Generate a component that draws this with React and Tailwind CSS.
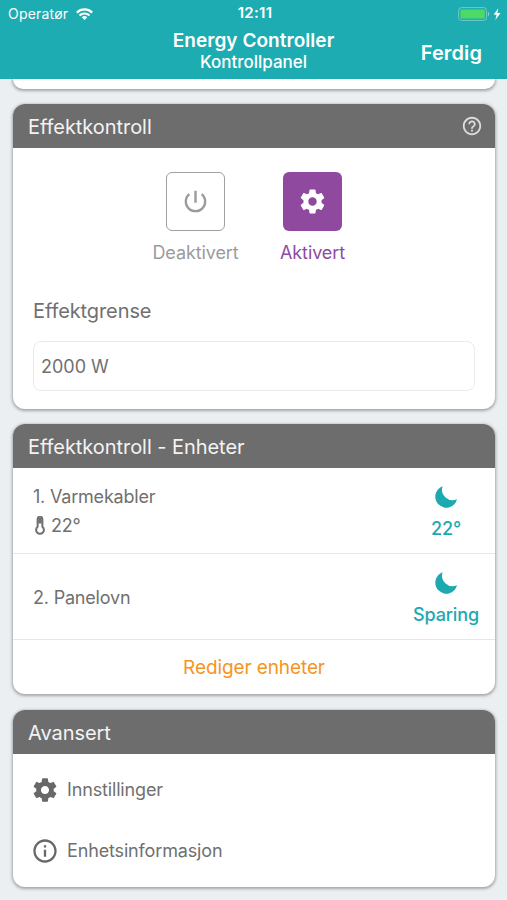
import React from "react";
import { MdHelpOutline, MdInfoOutline, MdPowerSettingsNew } from "react-icons/md";

const GearIcon = ({ className }) => (
  <svg viewBox="0 0 24 24" fill="currentColor" className={className}>
    <path d="M19.43 12.98c.04-.32.07-.64.07-.98s-.03-.66-.07-.98l2.11-1.65c.19-.15.24-.42.12-.64l-2-3.46c-.12-.22-.39-.3-.61-.22l-2.49 1c-.52-.4-1.08-.73-1.69-.98l-.38-2.65C14.46 2.18 14.25 2 14 2h-4c-.25 0-.46.18-.49.42l-.38 2.65c-.61.25-1.17.59-1.69.98l-2.49-1c-.23-.09-.49 0-.61.22l-2 3.46c-.13.22-.07.49.12.64l2.11 1.65c-.04.32-.07.65-.07.98s.03.66.07.98l-2.11 1.65c-.19.15-.24.42-.12.64l2 3.46c.12.22.39.3.61.22l2.49-1c.52.4 1.08.73 1.69.98l.38 2.65c.03.24.24.42.49.42h4c.25 0 .46-.18.49-.42l.38-2.65c.61-.25 1.17-.59 1.69-.98l2.49 1c.23.09.49 0 .61-.22l2-3.46c.12-.22.07-.49-.12-.64l-2.11-1.65zM12 15.5c-1.93 0-3.5-1.57-3.5-3.5s1.57-3.5 3.5-3.5 3.5 1.57 3.5 3.5-1.57 3.5-3.5 3.5z" />
  </svg>
);

const MoonIcon = () => (
  <svg viewBox="0 0 22 22" fill="currentColor" className="w-[22px] h-[22px]">
    <path d="M7.6 0.3A11 11 0 1 0 22 13.2A10.6 10.6 0 0 1 7.6 0.3z" />
  </svg>
);

const ThermometerIcon = () => (
  <svg viewBox="0 0 10 19" fill="none" stroke="currentColor" className="w-[10px] h-[19px]">
    <path d="M2.6 10.8V3.2a2.4 2.4 0 0 1 4.8 0v7.6a3.9 3.9 0 1 1-4.8 0z" strokeWidth="2" />
    <path d="M5 2v5.5" strokeWidth="3.6" />
  </svg>
);

const WifiIcon = () => (
  <svg viewBox="0 0 17 12" fill="none" stroke="currentColor" className="w-[17px] h-3">
    <path d="M0.8 4.6a11 11 0 0 1 15.4 0" strokeWidth="2.2" />
    <path d="M3.5 7.5a7.1 7.1 0 0 1 10 0" strokeWidth="2.1" />
    <path d="M8.5 12L5.8 9.3a3.9 3.9 0 0 1 5.4 0z" fill="currentColor" stroke="none" />
  </svg>
);

const BatteryIcon = () => (
  <svg viewBox="0 0 44 14" className="w-11 h-3.5">
    <rect x="0.6" y="0.6" width="28" height="12.8" rx="3" fill="none" stroke="#74c9cc" />
    <rect x="2.4" y="2.4" width="24.4" height="9.2" rx="1.2" fill="#4cd964" />
    <path d="M30 4.8c1.6.7 1.6 3.7 0 4.4z" fill="#8fd3d5" />
    <path d="M40.3 1.2L35.6 7.8h3l-1.3 5.2L42.6 6h-3.2z" fill="#fff" />
  </svg>
);

const Card = ({ title, help, className, children }) => (
  <section
    className={`overflow-hidden rounded-xl bg-white shadow-[0_1px_3px_1px_rgba(0,0,0,0.3)] ${className}`}
  >
    <div className="flex h-11 items-center justify-between bg-[#6d6d6d] pl-[15px] pr-3 text-white">
      <h2 className="pt-px text-[20px] tracking-[-0.05px] text-[#f3f3f3]">{title}</h2>
      {help && <MdHelpOutline className="size-[22px] text-[#dcdcdc]" />}
    </div>
    {children}
  </section>
);

const DeviceRow = ({ name, temp, mode }) => (
  <div className="flex h-[86px] items-center justify-between border-b border-[#e6e6e6] pl-5 pr-4">
    <div className="pt-px text-[18px] leading-[29px] tracking-[-0.2px]">
      <p>{name}</p>
      {temp && (
        <p className="flex items-center gap-1.5 pl-0.5">
          <ThermometerIcon />
          <span>{temp}</span>
        </p>
      )}
    </div>
    <div className="flex w-[66px] flex-col items-center gap-[9px] pt-[5px] text-[#1ca9af]">
      <MoonIcon />
      <p className="text-[18px] leading-6 font-medium tracking-[-0.1px]">{mode}</p>
    </div>
  </div>
);

const App = () => {
  return (
    <div className="flex h-[900px] w-[507px] flex-col overflow-hidden bg-[#ebeff2] font-['Inter',sans-serif] text-[#707070]">
      <header className="h-[79px] shrink-0 bg-[#1dacb2] text-white">
        {/* Status bar */}
        <div className="grid h-[27px] grid-cols-[1fr_auto_1fr] items-center pl-2 pr-[5px] text-[14px]">
          <div className="flex items-center gap-2">
            <span className="tracking-[0.2px]">Operatør</span>
            <WifiIcon />
          </div>
          <span className="text-center text-[15px] font-semibold tracking-[0.3px]">12:11</span>
          <div className="flex justify-end">
            <BatteryIcon />
          </div>
        </div>

        {/* Title bar */}
        <div className="grid h-[50px] grid-cols-[1fr_auto_1fr] items-center px-[25px]">
          <span />
          <div className="pb-px text-center">
            <h1 className="text-[19px] leading-[22px] font-semibold tracking-[0.05px]">
              Energy Controller
            </h1>
            <p className="text-[17px] leading-[21px] font-medium">Kontrollpanel</p>
          </div>
          <button className="pt-px text-right text-[20px] font-semibold tracking-[0.1px]">
            Ferdig
          </button>
        </div>
      </header>

      <main className="flex flex-col pl-[13px] pr-3">
        <div className="h-2.5 rounded-b-xl bg-white shadow-[0_1px_3px_1px_rgba(0,0,0,0.3)] [clip-path:inset(0_-8px_-8px_-8px)]" />

        <Card title="Effektkontroll" help className="mt-[15px] h-[305px]">
          <div className="flex justify-center gap-[30px] pt-6">
            <div className="flex w-[87px] flex-col items-center gap-2 text-[#9b9b9b]">
              <div className="flex size-[59px] items-center justify-center rounded-md border border-[#a0a0a0]">
                <MdPowerSettingsNew className="size-[29px]" />
              </div>
              <span className="text-[18px] leading-7 tracking-[-0.1px]">Deaktivert</span>
            </div>
            <div className="flex w-[87px] flex-col items-center gap-2 text-[#8f4a9f]">
              <div className="flex size-[59px] items-center justify-center rounded-md bg-[#8f4a9f]">
                <GearIcon className="size-[29px] text-white" />
              </div>
              <span className="text-[18px] leading-7 tracking-[-0.1px]">Aktivert</span>
            </div>
          </div>
          <div className="px-5 pt-[30px]">
            <label className="block text-[20px] leading-7 tracking-[-0.1px]">Effektgrense</label>
            <div className="mt-4 flex h-[50px] items-center rounded-lg border border-[#ebebeb] pl-[7px] text-[18px]">
              2000 W
            </div>
          </div>
        </Card>

        <Card title="Effektkontroll - Enheter" className="mt-[15px] h-[270px]">
          <DeviceRow name="1. Varmekabler" temp="22°" mode="22°" />
          <DeviceRow name="2. Panelovn" mode="Sparing" />
          <button className="flex h-[55px] w-full items-center justify-center pt-0.5 text-[19px] tracking-[-0.1px] text-[#f7941d]">
            Rediger enheter
          </button>
        </Card>

        <Card title="Avansert" className="mt-4 h-[177px]">
          <div className="flex flex-col gap-[33px] pl-[18px] pt-[22px] text-[18px] leading-7 tracking-[-0.15px]">
            <div className="flex items-center gap-2">
              <GearIcon className="size-7 text-[#686868]" />
              <span>Innstillinger</span>
            </div>
            <div className="flex items-center gap-2">
              <MdInfoOutline className="size-7 text-[#686868]" />
              <span>Enhetsinformasjon</span>
            </div>
          </div>
        </Card>
      </main>
    </div>
  );
};

export default App;
